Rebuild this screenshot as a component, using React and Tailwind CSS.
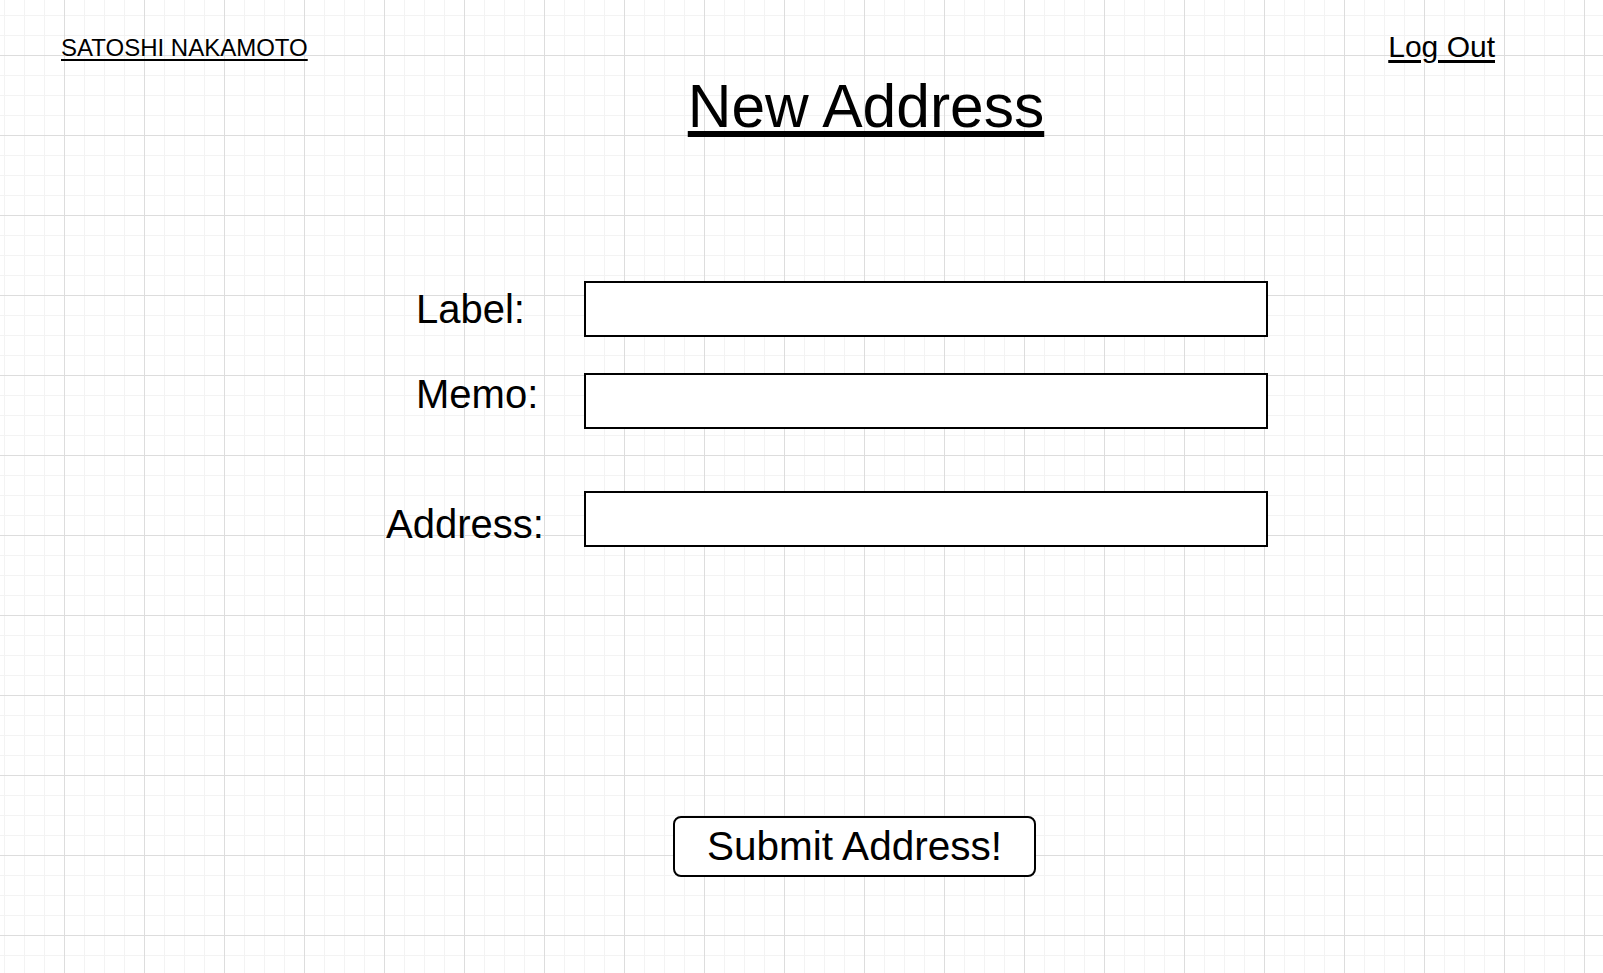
import React from "react";

const gridBg =
  "bg-white bg-[linear-gradient(to_right,#dddddd_1px,transparent_1px),linear-gradient(to_bottom,#dddddd_1px,transparent_1px),linear-gradient(to_right,#f3f3f3_1px,transparent_1px),linear-gradient(to_bottom,#f3f3f3_1px,transparent_1px)] bg-[size:80px_80px,80px_80px,20px_20px,20px_20px] bg-[position:64px_55px,64px_55px,4px_15px,4px_15px]";

const inputStyle = "h-[56px] w-[684px] border-2 border-black bg-white outline-none";

const App = () => {
  return (
    <div
      className={`h-[973px] w-full overflow-hidden text-black font-['Liberation_Sans',Arial,sans-serif] ${gridBg}`}
    >
      <div className="flex items-start justify-between pl-[61px] pr-[108px] pt-[31px]">
        <a href="#" className="mt-[5px] text-[24px] leading-none underline underline-offset-[3px]">
          SATOSHI NAKAMOTO
        </a>
        <a href="#" className="mt-[1px] text-[30px] leading-none underline underline-offset-[3px]">
          Log Out
        </a>
      </div>

      <h1 className="mt-[14px] h-[60px] pl-[129px] text-center text-[60.5px] leading-[60px] underline">
        New Address
      </h1>

      <form className="mt-[145px] flex flex-col pl-[386px]">
        <div className="flex items-center">
          <label className="w-[198px] pl-[30px] text-[40px] leading-none">Label:</label>
          <input className={inputStyle} />
        </div>
        <div className="mt-[36px] flex items-center">
          <label className="mb-[14px] w-[198px] pl-[30px] text-[40px] leading-none">Memo:</label>
          <input className={inputStyle} />
        </div>
        <div className="mt-[62px] flex items-center">
          <label className="mt-[10px] w-[198px] text-[40px] leading-none">Address:</label>
          <input className={inputStyle} />
        </div>
      </form>

      <div className="mt-[269px] flex justify-center pl-[106px]">
        <button className="h-[61px] w-[363px] rounded-[8px] border-2 border-black bg-white pb-[1px] text-[40.5px] leading-none">
          Submit Address!
        </button>
      </div>
    </div>
  );
};

export default App;
